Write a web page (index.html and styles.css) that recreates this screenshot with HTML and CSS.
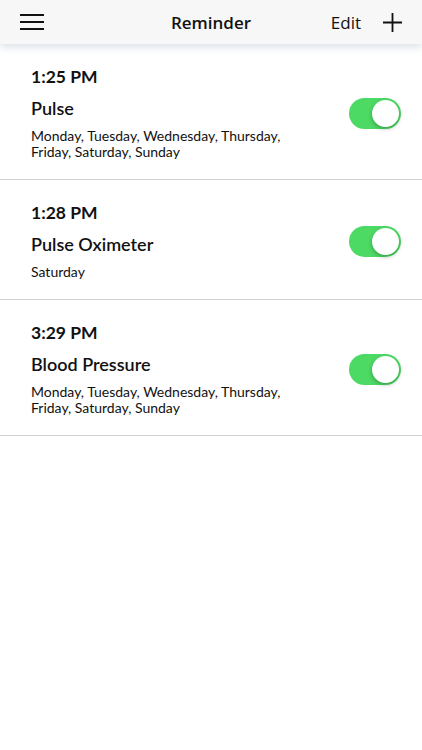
FILE: index.html
```html
<!DOCTYPE html>
<html>
<head>
  <link rel="stylesheet" href="styles.css">
  <title>Reminder</title>
</head>
<body>
  <div class="navbar">
    <button class="menu-btn">
      <svg width="24" height="17" viewBox="0 0 24 17"><path d="M0 1h24M0 8h24M0 15h24" stroke="#111" stroke-width="2"/></svg>
    </button>
    <div class="title">Reminder</div>
    <div class="actions">
      <span class="edit">Edit</span>
      <svg width="19" height="19" viewBox="0 0 19 19"><path d="M9.5 0v19M0 9.5h19" stroke="#111" stroke-width="1.8"/></svg>
    </div>
  </div>

  <div class="list">
    <div class="reminder">
      <div class="info">
        <div class="time">1:25 PM</div>
        <div class="name">Pulse</div>
        <div class="days">Monday, Tuesday, Wednesday, Thursday,<br>Friday, Saturday, Sunday</div>
      </div>
      <div class="switch on"><span class="knob"></span></div>
    </div>
    <div class="reminder short">
      <div class="info">
        <div class="time">1:28 PM</div>
        <div class="name">Pulse Oximeter</div>
        <div class="days">Saturday</div>
      </div>
      <div class="switch on"><span class="knob"></span></div>
    </div>
    <div class="reminder">
      <div class="info">
        <div class="time">3:29 PM</div>
        <div class="name">Blood Pressure</div>
        <div class="days">Monday, Tuesday, Wednesday, Thursday,<br>Friday, Saturday, Sunday</div>
      </div>
      <div class="switch on"><span class="knob"></span></div>
    </div>
  </div>
</body>
</html>
```

FILE: styles.css
```css
body {
  margin: 0;
  background: #fff;
  font-family: Lato, "Noto Sans", sans-serif;
  color: #111;
}
.navbar {
  height: 44px;
  background: #f7f7f7;
  display: flex;
  align-items: center;
  padding: 0 20px;
  box-shadow: 0 3px 8px rgba(150, 170, 190, 0.35);
  position: relative;
}
.menu-btn {
  border: none;
  background: none;
  padding: 0;
  width: 100px;
  display: flex;
}
.title {
  flex: 1;
  text-align: center;
  font-family: "Open Sans", sans-serif;
  font-size: 17px;
  font-weight: 600;
}
.actions {
  width: 100px;
  display: flex;
  justify-content: flex-end;
  align-items: center;
  gap: 22px;
}
.edit {
  font-family: "Open Sans", sans-serif;
  font-size: 17px;
}
.reminder {
  height: 132px;
  border-bottom: 1px solid #cfcfcf;
  display: flex;
  align-items: center;
  padding: 3px 21px 0 31px;
}
.reminder.short {
  height: 116px;
}
.info {
  flex: 1;
}
.time {
  font-size: 17.5px;
  font-weight: 700;
  line-height: 22px;
}
.name {
  font-size: 18px;
  font-weight: 600;
  line-height: 22px;
  margin-top: 9px;
}
.days {
  font-size: 14px;
  line-height: 16px;
  margin-top: 9px;
}
.switch {
  width: 52px;
  height: 31px;
  border-radius: 16px;
  background: #4cd964;
  position: relative;
}
.knob {
  position: absolute;
  right: 2px;
  top: 2px;
  width: 27px;
  height: 27px;
  border-radius: 50%;
  background: #fff;
  box-shadow: 0 2px 4px rgba(0, 0, 0, 0.25);
}
```
